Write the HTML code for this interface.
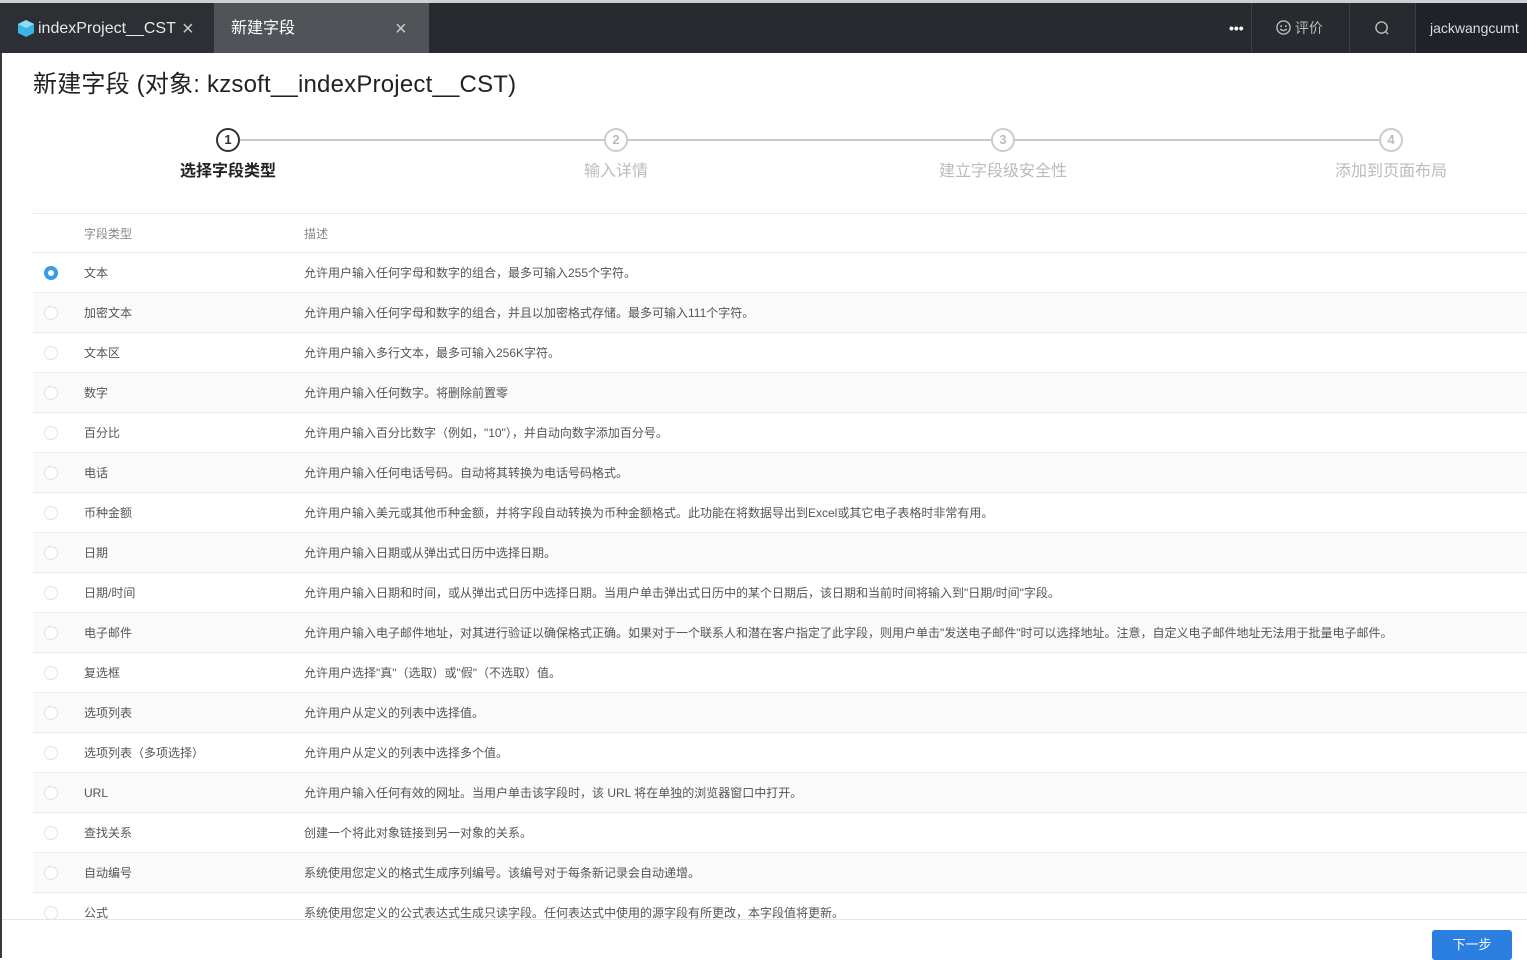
<!DOCTYPE html>
<html><head><meta charset="utf-8"><style>
*{margin:0;padding:0;box-sizing:border-box}
body{width:1527px;height:958px;overflow:hidden;background:#fff;font-family:"Liberation Sans","Noto Sans CJK SC",sans-serif;position:relative}
.top{position:absolute;left:0;top:0;width:1527px;height:53px;background:#272a2f;border-top:3px solid #cfd0d2}
.tab1{position:absolute;left:0;top:0;width:214px;height:50px;background:#2c2f34;color:#e8e8e8;font-size:16px;line-height:52px;padding-left:38px}
.tab2{position:absolute;left:214px;top:0;width:215px;height:50px;background:#505357;color:#fff;font-size:16px;line-height:52px;padding-left:17px}
.x{position:absolute;font-size:20px;color:#ccc;top:0}
.sep{position:absolute;top:0;width:1px;height:50px;background:#3d4045}
.left{position:absolute;left:0;top:53px;width:2px;height:905px;background:#3a3a3a}
h1{position:absolute;left:33px;top:69px;font-size:24px;font-weight:normal;color:#222;line-height:32px;letter-spacing:0.2px}
.step{position:absolute;top:128px;width:24px;height:24px;border-radius:50%;border:2px solid #ccc;color:#bbb;font-size:13px;font-weight:bold;text-align:center;line-height:20px;background:#fff}
.sl{position:absolute;top:162px;font-size:16px;color:#bbb;text-align:center;width:200px;line-height:20px}
.line{position:absolute;top:139px;left:240px;width:1140px;height:2px;background:#c8c8cc}
.hd{position:absolute;left:33px;top:213px;width:1494px;height:40px;border-top:1px solid #e8e8e8;border-bottom:1px solid #e8e8e8;font-size:12px;color:#888}
.row{position:absolute;left:33px;width:1494px;height:40px;border-bottom:1px solid #ececec;font-size:12px;color:#555}
.row span,.hd span{position:absolute;top:1px;line-height:39px}
.r{position:absolute;left:11px;top:13px;width:14px;height:14px;border-radius:50%;border:1px solid #e2e2e2;background:#fff}
.r.on{border:4px solid #3a9ce8}
.foot{position:absolute;left:2px;top:919px;width:1525px;height:39px;background:#fff;border-top:1px solid #e6e6e6}
.btn{position:absolute;left:1432px;top:930px;width:80px;height:30px;background:#2b7fe0;border-radius:3px;color:#fff;font-size:13px;text-align:center;line-height:30px}
</style></head><body>
<div class="top">
<div class="tab1"><svg style="position:absolute;left:18px;top:17px" width="16" height="17" viewBox="0 0 16 17"><path d="M8 0L16 4V13L8 17L0 13V4Z" fill="#3db4e8"/><path d="M8 0L16 4L8 8L0 4Z" fill="#8fdcf8"/></svg>indexProject__CST<span class="x" style="left:182px">×</span></div>
<div class="tab2">新建字段<span class="x" style="left:181px">×</span></div>
<div style="position:absolute;left:1229px;top:0;line-height:50px;color:#fff;font-size:14px;font-weight:bold">•••</div>
<div class="sep" style="left:1251px"></div>
<div style="position:absolute;left:1276px;top:0;line-height:50px;color:#bbb;font-size:14px"><svg width="15" height="15" viewBox="0 0 16 16" style="vertical-align:-2px"><circle cx="8" cy="8" r="7" fill="none" stroke="#bbb" stroke-width="1.5"/><circle cx="5.5" cy="6.5" r="1" fill="#bbb"/><circle cx="10.5" cy="6.5" r="1" fill="#bbb"/><path d="M4.5 9.5Q8 13 11.5 9.5" fill="none" stroke="#bbb" stroke-width="1.5"/></svg> 评价</div>
<div class="sep" style="left:1349px"></div>
<svg style="position:absolute;left:1375px;top:18px" width="15" height="15" viewBox="0 0 16 16"><circle cx="7" cy="7" r="6" fill="none" stroke="#bbb" stroke-width="1.5"/><path d="M11 11L14 14" stroke="#bbb" stroke-width="1.5"/></svg>
<div class="sep" style="left:1415px"></div>
<div style="position:absolute;left:1416px;top:0;width:111px;height:50px;background:#1f2228;color:#ddd;font-size:14px;line-height:50px;padding-left:14px">jackwangcumt</div>
</div>
<div class="left"></div>
<h1>新建字段 (对象: kzsoft__indexProject__CST)</h1>
<div class="line"></div>
<div class="step" style="left:216px;border-color:#333;color:#333">1</div>
<div class="step" style="left:604px">2</div>
<div class="step" style="left:991px">3</div>
<div class="step" style="left:1379px">4</div>
<div class="sl" style="left:128px;color:#222;font-weight:bold">选择字段类型</div>
<div class="sl" style="left:516px">输入详情</div>
<div class="sl" style="left:903px">建立字段级安全性</div>
<div class="sl" style="left:1291px">添加到页面布局</div>
<div class="hd"><span style="left:51px">字段类型</span><span style="left:271px">描述</span></div>
<div class="row" style="top:253px"><div class="r on"></div><span style="left:51px">文本</span><span style="left:271px">允许用户输入任何字母和数字的组合，最多可输入255个字符。</span></div>
<div class="row" style="top:293px;background:#fafafa"><div class="r"></div><span style="left:51px">加密文本</span><span style="left:271px">允许用户输入任何字母和数字的组合，并且以加密格式存储。最多可输入111个字符。</span></div>
<div class="row" style="top:333px"><div class="r"></div><span style="left:51px">文本区</span><span style="left:271px">允许用户输入多行文本，最多可输入256K字符。</span></div>
<div class="row" style="top:373px;background:#fafafa"><div class="r"></div><span style="left:51px">数字</span><span style="left:271px">允许用户输入任何数字。将删除前置零</span></div>
<div class="row" style="top:413px"><div class="r"></div><span style="left:51px">百分比</span><span style="left:271px">允许用户输入百分比数字（例如，"10"），并自动向数字添加百分号。</span></div>
<div class="row" style="top:453px;background:#fafafa"><div class="r"></div><span style="left:51px">电话</span><span style="left:271px">允许用户输入任何电话号码。自动将其转换为电话号码格式。</span></div>
<div class="row" style="top:493px"><div class="r"></div><span style="left:51px">币种金额</span><span style="left:271px">允许用户输入美元或其他币种金额，并将字段自动转换为币种金额格式。此功能在将数据导出到Excel或其它电子表格时非常有用。</span></div>
<div class="row" style="top:533px;background:#fafafa"><div class="r"></div><span style="left:51px">日期</span><span style="left:271px">允许用户输入日期或从弹出式日历中选择日期。</span></div>
<div class="row" style="top:573px"><div class="r"></div><span style="left:51px">日期/时间</span><span style="left:271px">允许用户输入日期和时间，或从弹出式日历中选择日期。当用户单击弹出式日历中的某个日期后，该日期和当前时间将输入到"日期/时间"字段。</span></div>
<div class="row" style="top:613px;background:#fafafa"><div class="r"></div><span style="left:51px">电子邮件</span><span style="left:271px">允许用户输入电子邮件地址，对其进行验证以确保格式正确。如果对于一个联系人和潜在客户指定了此字段，则用户单击"发送电子邮件"时可以选择地址。注意，自定义电子邮件地址无法用于批量电子邮件。</span></div>
<div class="row" style="top:653px"><div class="r"></div><span style="left:51px">复选框</span><span style="left:271px">允许用户选择"真"（选取）或"假"（不选取）值。</span></div>
<div class="row" style="top:693px;background:#fafafa"><div class="r"></div><span style="left:51px">选项列表</span><span style="left:271px">允许用户从定义的列表中选择值。</span></div>
<div class="row" style="top:733px"><div class="r"></div><span style="left:51px">选项列表（多项选择）</span><span style="left:271px">允许用户从定义的列表中选择多个值。</span></div>
<div class="row" style="top:773px;background:#fafafa"><div class="r"></div><span style="left:51px">URL</span><span style="left:271px">允许用户输入任何有效的网址。当用户单击该字段时，该 URL 将在单独的浏览器窗口中打开。</span></div>
<div class="row" style="top:813px"><div class="r"></div><span style="left:51px">查找关系</span><span style="left:271px">创建一个将此对象链接到另一对象的关系。</span></div>
<div class="row" style="top:853px;background:#fafafa"><div class="r"></div><span style="left:51px">自动编号</span><span style="left:271px">系统使用您定义的格式生成序列编号。该编号对于每条新记录会自动递增。</span></div>
<div class="row" style="top:893px"><div class="r"></div><span style="left:51px">公式</span><span style="left:271px">系统使用您定义的公式表达式生成只读字段。任何表达式中使用的源字段有所更改，本字段值将更新。</span></div>
<div class="foot"></div>
<div class="btn">下一步</div>
</body></html>
